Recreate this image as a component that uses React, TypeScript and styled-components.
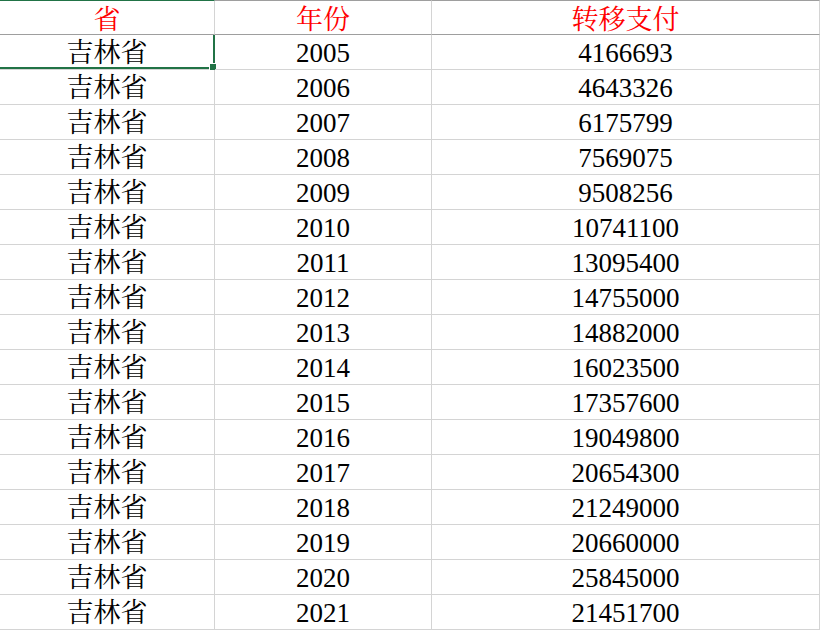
import React from "react";
import styled, { createGlobalStyle } from "styled-components";

const Global = createGlobalStyle`
  html, body { margin: 0; padding: 0; background: #ffffff; }
  body { overflow: hidden; }
`;

const Sheet = styled.div`
  display: grid;
  grid-template-columns: 215px 217px 388px;
  width: 820px;
  font-family: "Liberation Serif", "Times New Roman", "Noto Serif CJK SC", "Noto Sans CJK SC", serif;
  font-size: 27px;
  color: #000000;
`;

const HeadCell = styled.div<{ $selected?: boolean }>`
  box-sizing: border-box;
  height: 35px;
  display: flex;
  align-items: center;
  justify-content: center;
  padding-top: 5px;
  border-top: 1px solid ${(p) => (p.$selected ? "#217346" : "#9e9e9e")};
  border-bottom: 1px solid #9e9e9e;
  border-right: 1px solid #d4d4d4;
  color: #ff0000;
  line-height: 1;
`;

const Cell = styled.div`
  position: relative;
  box-sizing: border-box;
  height: 35px;
  display: flex;
  align-items: center;
  justify-content: center;
  padding-top: 3px;
  border-bottom: 1px solid #d4d4d4;
  border-right: 1px solid #d4d4d4;
  line-height: 1;
`;

const Selection = styled.div`
  position: absolute;
  top: 0;
  left: -2px;
  right: -1px;
  bottom: 0;
  border-right: 2px solid #217346;
  border-bottom: 2px solid #217346;
  pointer-events: none;
`;

const Handle = styled.div`
  position: absolute;
  right: -4px;
  bottom: -4px;
  width: 6px;
  height: 6px;
  background: #217346;
  border: 1px solid #ffffff;
`;

const rows: [number, number][] = [
  [2005, 4166693],
  [2006, 4643326],
  [2007, 6175799],
  [2008, 7569075],
  [2009, 9508256],
  [2010, 10741100],
  [2011, 13095400],
  [2012, 14755000],
  [2013, 14882000],
  [2014, 16023500],
  [2015, 17357600],
  [2016, 19049800],
  [2017, 20654300],
  [2018, 21249000],
  [2019, 20660000],
  [2020, 25845000],
  [2021, 21451700],
];

export default function App() {
  return (
    <>
      <Global />
      <Sheet>
        <HeadCell $selected>省</HeadCell>
        <HeadCell>年份</HeadCell>
        <HeadCell>转移支付</HeadCell>
        {rows.map(([year, value], i) => (
          <React.Fragment key={year}>
            <Cell>
              吉林省
              {i === 0 && (
                <Selection>
                  <Handle />
                </Selection>
              )}
            </Cell>
            <Cell>{year}</Cell>
            <Cell>{value}</Cell>
          </React.Fragment>
        ))}
      </Sheet>
    </>
  );
}
